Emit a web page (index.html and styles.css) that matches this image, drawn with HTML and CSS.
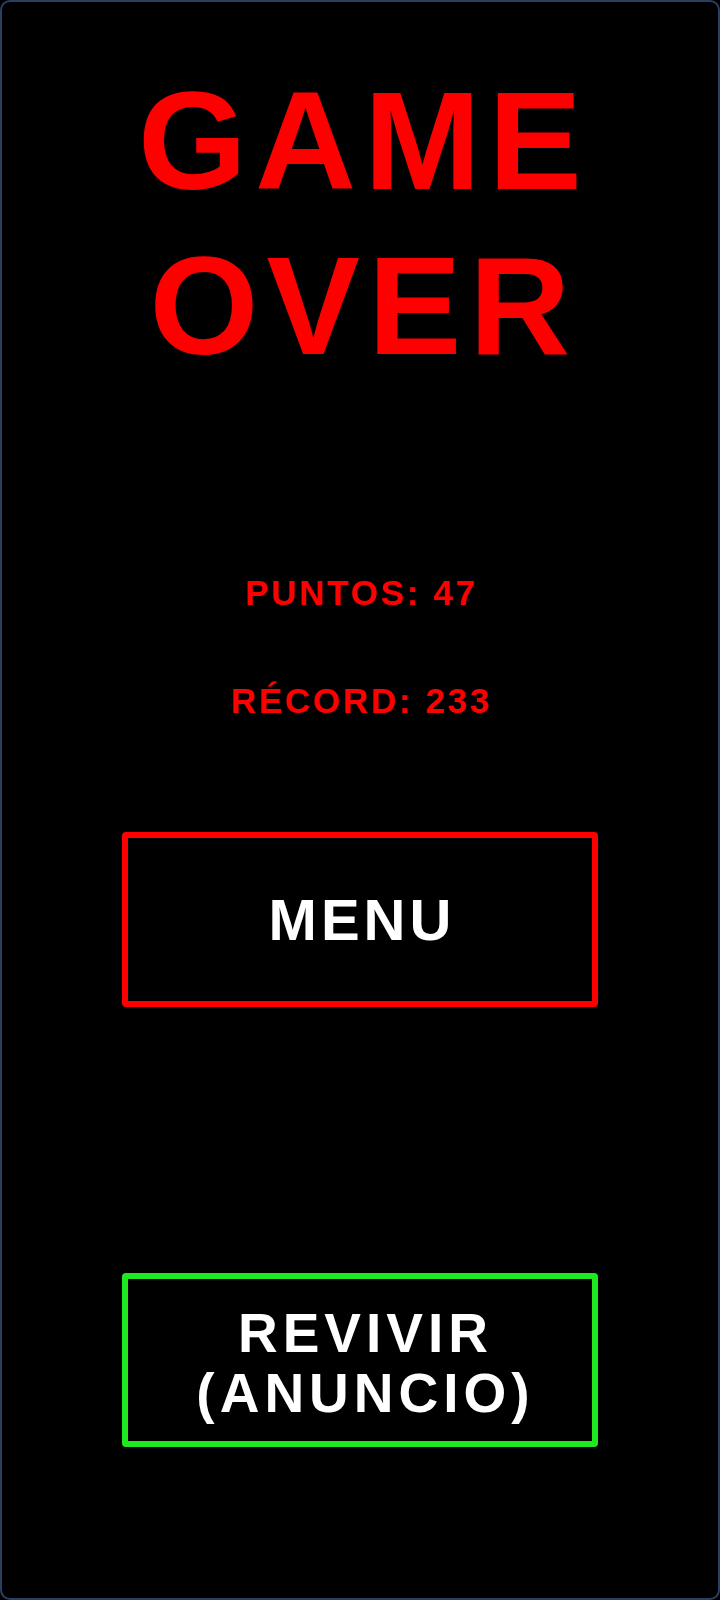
FILE: index.html
```html
<!DOCTYPE html>
<html lang="es">
  <head>
    <meta charset="UTF-8" />
    <meta name="viewport" content="width=device-width, initial-scale=1.0" />
    <title>Game Over</title>
    <link rel="stylesheet" href="styles.css">
  </head>
  <body>
    <div class="screen">
      <h1 class="title">GAME<br />OVER</h1>

      <div class="stats">
        <p class="stat">PUNTOS: 47</p>
        <p class="stat">RÉCORD: 233</p>
      </div>

      <button class="btn btn-menu">MENU</button>
      <button class="btn btn-revive">REVIVIR<br />(ANUNCIO)</button>
    </div>
  </body>
</html>
```

FILE: styles.css
```css
body {
  margin: 0;
  padding: 0;
  background: #000;
  font-family: "Liberation Sans", Arial, sans-serif;
}

/* phone frame */
.screen {
  height: 1600px;
  box-sizing: border-box;
  border: 2px solid #2b3d63;
  border-radius: 10px;
  background: #000;
  display: flex;
  flex-direction: column;
  align-items: center;
  padding-top: 56px;
}

.title {
  margin: 0;
  color: #ff0000;
  font-size: 140px;
  font-weight: bold;
  line-height: 165px;
  letter-spacing: 8px;
  padding-left: 8px;
  text-align: center;
}

.stats {
  margin-top: 185px;
  display: flex;
  flex-direction: column;
  align-items: center;
  gap: 68px;
}

.stat {
  margin: 0;
  color: #ff0000;
  font-size: 35px;
  font-weight: bold;
  line-height: 40px;
  letter-spacing: 2.7px;
  padding-left: 2.7px;
}

.btn {
  width: 476px;
  height: 175px;
  box-sizing: border-box;
  background: #000;
  border-radius: 4px;
  color: #fff;
  font-family: "Liberation Sans", Arial, sans-serif;
  font-weight: bold;
  display: flex;
  align-items: center;
  justify-content: center;
  text-align: center;
  cursor: pointer;
}

.btn-menu {
  margin-top: 111px;
  border: 6px solid #ff0000;
  font-size: 58px;
  letter-spacing: 4px;
  padding-left: 10px;
}

.btn-revive {
  margin-top: 266px;
  height: 174px;
  border: 6px solid #1fe81f;
  font-size: 55px;
  line-height: 60px;
  letter-spacing: 5px;
  padding: 6px 0 0 11px;
}
```
